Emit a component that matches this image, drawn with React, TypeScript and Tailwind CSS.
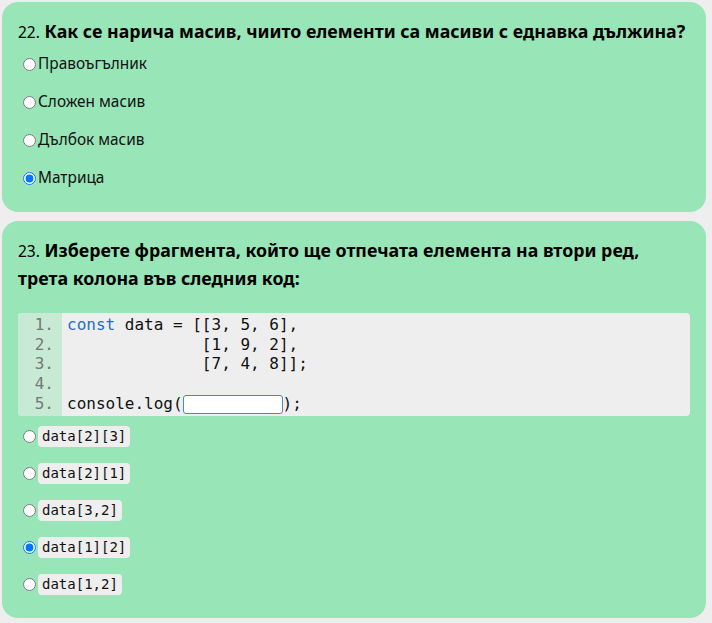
import React from "react";

const sans = "font-['Noto_Sans','Open_Sans',sans-serif]";
const mono = "font-['DejaVu_Sans_Mono','Liberation_Mono',monospace]";

function Radio({ name, checked }: { name: string; checked?: boolean }) {
  return (
    <input
      type="radio"
      name={name}
      defaultChecked={checked}
      className="m-0 mr-[2px] ml-[5px] h-[13px] w-[13px] shrink-0 accent-[#0075ff]"
    />
  );
}

export default function App() {
  const q22 = ["Правоъгълник", "Сложен масив", "Дълбок масив", "Матрица"];
  const q23 = ["data[2][3]", "data[2][1]", "data[3,2]", "data[1][2]", "data[1,2]"];

  return (
    <main className={`min-h-[623px] w-[712px] bg-[#eeeeee] pt-[2px] pl-[2px] ${sans}`}>
      {/* Question 22 */}
      <section className="w-[704px] rounded-[16px] bg-[#98e5b8] px-4 pt-4 pb-[15px]">
        <h3 className="text-[17.8px] leading-[26px] font-bold text-black">
          <span className="text-[15.5px] font-normal">22.</span> Как се нарича масив, чиито елементи са масиви с еднавка дължина?
        </h3>
        <div className="flex flex-col">
          {q22.map((o, i) => (
            <label key={o} className="flex h-[38px] items-center text-[15.4px] text-[#111]">
              <Radio name="q22" checked={i === 3} />
              {o}
            </label>
          ))}
        </div>
      </section>

      {/* Question 23 */}
      <section className="mt-[9px] w-[704px] rounded-[16px] bg-[#98e5b8] px-4 pt-4 pb-[15px]">
        <h3 className="text-[17.8px] leading-[27px] font-bold text-black">
          <span className="text-[15.5px] font-normal">23.</span> Изберете фрагмента, който ще отпечата елемента на втори ред,
          <br />
          трета колона във следния код:
        </h3>

        <div className={`mt-[21px] flex rounded-[4px] bg-[#eeeeee] text-[16px] leading-[19.7px] text-[#111] ${mono}`}>
          <div className="flex w-[44px] flex-col items-end rounded-l-[4px] bg-[#c6ead3] py-[2px] pr-[8px] text-[#777]">
            {[1, 2, 3, 4, 5].map((n) => (
              <span key={n}>{n}.</span>
            ))}
          </div>
          <pre className={`py-[2px] pl-[5px] ${mono}`}>
            <span className="text-[#1d6fc4]">const</span> data = [[3, 5, 6],{"\n"}
            {"              "}[1, 9, 2],{"\n"}
            {"              "}[7, 4, 8]];{"\n"}
            {"\n"}
            console.log(
            <input
              type="text"
              className="h-[19px] w-[100px] rounded-[3px] border border-[#4a86c8] bg-white align-middle"
            />
            );
          </pre>
        </div>

        <div className="mt-[2px] flex flex-col">
          {q23.map((o, i) => (
            <label key={o} className="flex h-[37px] items-center">
              <Radio name="q23" checked={i === 3} />
              <code className={`rounded-[4px] bg-[#eeeeee] px-[4px] text-[14px] leading-[21px] text-[#111] ${mono}`}>
                {o}
              </code>
            </label>
          ))}
        </div>
      </section>
    </main>
  );
}
